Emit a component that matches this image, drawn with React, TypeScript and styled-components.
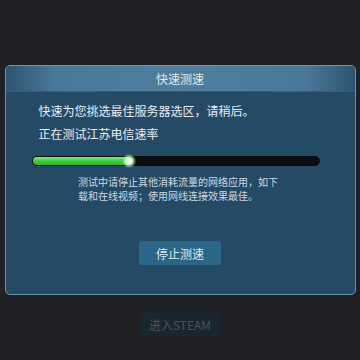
import React, { FC } from 'react';
import styled, { createGlobalStyle } from 'styled-components';

const GlobalStyle = createGlobalStyle`
  html, body {
    margin: 0;
    padding: 0;
    background: #212125;
  }
  #root {
    height: 360px;
  }
`;

const Page = styled.div`
  height: 360px;
  display: flex;
  flex-direction: column;
  align-items: center;
  padding-top: 65px;
  box-sizing: border-box;
  font-family: 'Noto Sans CJK SC', 'Noto Sans', sans-serif;
  background: #212125;
`;

const Dialog = styled.div`
  width: 351px;
  height: 230px;
  box-sizing: border-box;
  border: 1px solid #6a93ae;
  border-radius: 5px;
  background: #244a66;
  overflow: hidden;
  display: flex;
  flex-direction: column;
`;

const Header = styled.div`
  height: 25px;
  flex-shrink: 0;
  display: flex;
  align-items: center;
  justify-content: center;
  font-size: 12px;
  color: #e2e8ec;
  background: linear-gradient(
    90deg,
    #2c5473 0%,
    #4a7898 14%,
    #4f7e9e 50%,
    #4a7898 86%,
    #2c5473 100%
  );
  border-bottom: 1px solid #335f7e;
`;

const Body = styled.div`
  flex: 1;
  display: flex;
  flex-direction: column;
  padding: 11px 34px 0 26px;
`;

const Line = styled.div<{ mt?: number }>`
  font-size: 12px;
  line-height: 16px;
  color: #e8ecef;
  padding-left: 7px;
  margin-top: ${(p) => p.mt ?? 0}px;
`;

const Track = styled.div`
  margin-top: 14px;
  width: 288px;
  height: 10px;
  box-sizing: border-box;
  border-radius: 5px;
  background: #0c0e10;
  border: 1px solid #0a0d10;
  position: relative;
`;

const Fill = styled.div`
  height: 100%;
  border-radius: 4px;
  background: linear-gradient(180deg, #7bef7b 0%, #3ed23e 45%, #2fb42f 100%);
  position: relative;
`;

const Glow = styled.div`
  position: absolute;
  right: -6px;
  top: -3px;
  width: 14px;
  height: 14px;
  border-radius: 50%;
  background: radial-gradient(circle, #ffffff 0%, #eaffea 30%, rgba(120, 240, 120, 0.4) 60%, rgba(0, 0, 0, 0) 75%);
`;

const Note = styled.div`
  align-self: center;
  margin-top: 9px;
  margin-left: 10px;
  width: 206px;
  font-size: 10px;
  line-height: 14px;
  color: #cfd9e0;
`;

const Button = styled.button<{ dim?: boolean }>`
  width: 82px;
  height: 24px;
  border: none;
  border-radius: 3px;
  font-family: 'Noto Sans CJK SC', 'Liberation Sans', sans-serif;
  font-size: 12px;
  padding: 0;
  background: ${(p) => (p.dim ? '#1a262d' : '#2a6688')};
  color: ${(p) => (p.dim ? '#4a5157' : '#e0e7eb')};
`;

const StopButton = styled(Button)`
  align-self: center;
  margin-top: 38px;
  margin-left: 8px;
`;

const SteamButton = styled(Button)`
  margin-top: 17px;
`;

const App: FC = () => {
  const progress = 34;
  return (
    <>
      <GlobalStyle />
      <Page>
        <Dialog>
          <Header>快速测速</Header>
          <Body>
            <Line>快速为您挑选最佳服务器选区，请稍后。</Line>
            <Line mt={7}>正在测试江苏电信速率</Line>
            <Track>
              <Fill style={{ width: `${progress}%` }}>
                <Glow />
              </Fill>
            </Track>
            <Note>
              测试中请停止其他消耗流量的网络应用，如下载和在线视频；使用网线连接效果最佳。
            </Note>
            <StopButton>停止测速</StopButton>
          </Body>
        </Dialog>
        <SteamButton dim>进入STEAM</SteamButton>
      </Page>
    </>
  );
};

export default App;
